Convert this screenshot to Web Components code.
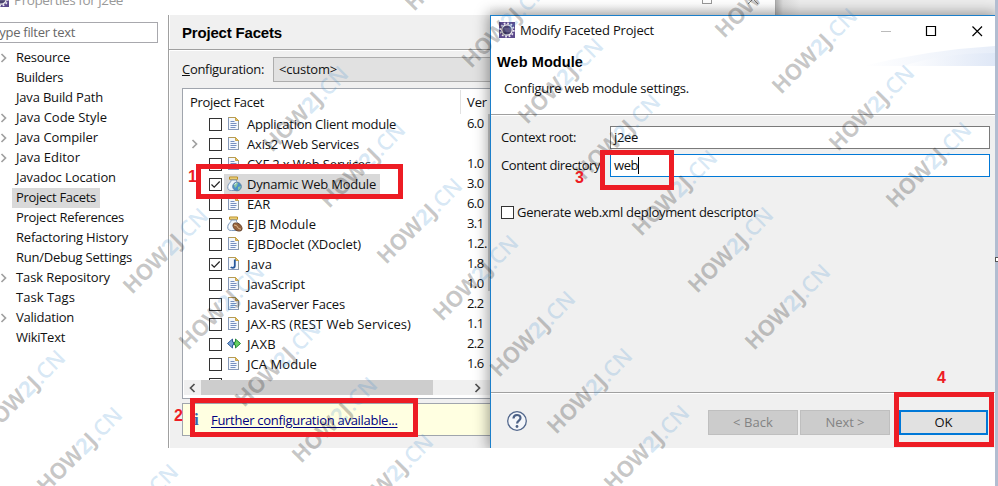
<!DOCTYPE html>
<html lang="en"><head><meta charset="utf-8"><title>Properties for j2ee</title>
<style>
html,body{margin:0;width:998px;height:486px;overflow:hidden;background:#fff}
body{font:13px/20px "Open Sans","Noto Sans",sans-serif;color:#111;position:relative}
</style></head><body>
<app-desktop>
  <properties-window></properties-window>
  <facet-dialog slot="dialog"></facet-dialog>
</app-desktop>
<water-marks></water-marks>
<call-out style="left:196px;top:164px;width:207px;height:35px"></call-out>
<call-out style="left:190px;top:398px;width:228px;height:39px"></call-out>
<call-out style="left:600px;top:150px;width:74px;height:40px"></call-out>
<call-out style="left:894px;top:392px;width:100px;height:55px"></call-out>
<step-number style="left:188px;top:167px">1</step-number>
<step-number style="left:174px;top:406px">2</step-number>
<step-number style="left:575px;top:168px">3</step-number>
<step-number style="left:937px;top:368px">4</step-number>
<script>
class Base extends HTMLElement{
  connectedCallback(){
    if(this.shadowRoot)return;
    this.attachShadow({mode:'open'}).innerHTML='<style>*{box-sizing:border-box}:host{display:block;box-sizing:border-box}'+this.css()+'</style>'+this.html();
  }
  css(){return ''} html(){return '<slot></slot>'}
}
const def=(n,css,html)=>customElements.define(n,class extends Base{
  css(){return css} html(){return typeof html==='function'?html(this):(html||'<slot></slot>')}
});

const page='<path d="M1.5 1.5h7l3 3v9h-10z" fill="#f4f8fd" stroke="#8f9a9a"/><path d="M1.5 1v13M1 13.500h11" stroke="#8799b8"/><path d="M1.500 1.500h7l3 3" fill="none" stroke="#b59a55"/><path d="M8.500 1.500v3h3z" fill="#e5c56c" stroke="#c9a548"/>';
const jar='<path d="M2.500 1h8v2.300h-8z" fill="#f5dc87" stroke="#b98d25"/><path d="M4 4v1.500C1 8 .5 10 .8 12.200 1 14 2.500 14.500 4.500 14.500h5c2 0 3-1 3-3C12.500 8.500 11 7 9.500 5.500V4z" fill="#edf4fb" stroke="#809bbd"/><path d="M2.500 9v3" stroke="#fff"/>';
const ICON={
 doc:page+'<path d="M3.500 5.500h4M3.500 7.500h6M3.500 9.500h6M3.500 11.500h5" stroke="#7791bf"/>',
 java:page+'<path d="M7.800 3.500v6.300q0 2-2 2-1.500 0-2-.7" fill="none" stroke="#28599b" stroke-width="1.800"/>',
 web:jar+'<circle cx="10" cy="10.500" r="4.300" fill="#4a91c8" stroke="#5e83a6"/><path d="M7 9q2-3 4-2l-1 3-2 2zM11 11l3-1-1 3-2 1z" fill="#8bc7a0"/><path d="M7.500 8.500l2-1.500" stroke="#e5f6ff"/>',
 ejb:jar+'<ellipse cx="10.500" cy="11" rx="5" ry="3.400" transform="rotate(35 10.500 11)" fill="#95623c" stroke="#654027"/><path d="M7 9q3 0 3.500 2t3.500 2.200" fill="none" stroke="#e2bd91"/>',
 jaxb:'<path d="M.5 7.500l5-4.500v3h1v3h-1v3z" fill="#76a2d4" stroke="#315c99"/><path d="M13.500 7.500l-5-4.500v3h-1v3h1v3z" fill="#68cf62" stroke="#278838"/>'
};
def('ui-icon',':host{width:16px;height:16px;flex:none}svg{display:block;overflow:visible}',e=>`<svg width="16" height="16" viewBox="0 0 16 16">${ICON[e.getAttribute('name')]||''}</svg>`);
def('ui-check',':host{width:13px;height:13px;flex:none;border:1px solid #333;background:#fff}svg{display:block}',e=>e.hasAttribute('on')?'<svg width="11" height="11"><path d="M1.500 5.500l2.700 2.700 5.500-5.700" fill="none" stroke="#222" stroke-width="1.200"/></svg>':'');
def('ui-arrow',':host{width:8px;height:10px;flex:none}svg{display:block}',()=>'<svg width="8" height="10"><path d="M1.500 1l4 4-4 4" fill="none" stroke="currentColor" stroke-width="1.700"/></svg>');
const ECL='<svg width="16" height="16"><rect width="16" height="16" fill="#5c4a8c"/><circle cx="8" cy="8" r="6.700" fill="none" stroke="#eeeaf4" stroke-width="1.800" stroke-dasharray="1.750 1.758"/><circle cx="8" cy="8" r="5.200" fill="#4a426f" stroke="#eee" stroke-width="1.300"/><path d="M4 7h8M4 9h8" stroke="#8f86ac" stroke-width=".7"/></svg>';

def('app-desktop',':host{width:998px;height:486px;position:relative;background:#fff;display:flex}.stage{width:995px;height:448px;overflow:hidden;position:relative;flex:none;background:linear-gradient(90deg,#b8b8b8 777px,#dcdcdc 783px,#ededed 800px)}.edge{flex:1;background:#b2bdd1;padding-top:257px}.edge i{display:block;height:5px;width:4px;border:1px solid #555;background:#fff}','<div class="stage"><slot></slot><slot name="dialog"></slot></div><div class="edge"><i></i></div>');

def('tree-item',':host{display:flex;height:20px;align-items:center;color:#111}.a{width:12px;display:flex;color:#a0a0a0}.l{padding:0 4px;height:20px;line-height:19px}:host([sel]) .l{background:#d9d9d9}',e=>`<div class="a">${e.hasAttribute('arrow')?'<ui-arrow></ui-arrow>':''}</div><div class="l"><slot></slot></div>`);
const tree=[['Resource',54,1],['Builders',47],['Java Build Path',87],['Java Code Style',91,1],['Java Compiler',82,1],['Java Editor',64,1],['Javadoc Location',100],['Project Facets',80],['Project References',108],['Refactoring History',112],['Run/Debug Settings',116],['Task Repository',94,1],['Task Tags',59],['Validation',58,1],['WikiText',49]];
def('nav-tree',':host{width:168px;flex:none;padding-top:7px}.f{height:21px;width:158px;border:1px solid #a8a8ad;border-left:0;color:#686868;line-height:18px;overflow:hidden;margin-bottom:5px}.f x-t{margin-left:-5px}',()=>'<div class="f"><x-t w="80">type filter text</x-t></div>'+tree.map(([t,w,a])=>`<tree-item ${a?'arrow':''} ${t=='Project Facets'?'sel':''}><x-t w="${w}">${t}</x-t></tree-item>`).join(''));

def('facet-row',':host{display:flex;height:20px;align-items:center;flex:none}.a{width:25px;padding-left:7px;color:#a0a0a0;display:flex}.n{display:flex;align-items:center;height:20px;padding:0 4px 0 3px;margin-left:2px}.n ui-icon{margin-right:4px}:host([sel]) .n{background:#d9d9d9}.v{margin-left:auto;width:24px;flex:none;line-height:18px;height:20px;white-space:nowrap}.n x-t{line-height:18px;height:20px}',e=>`<div class="a">${e.hasAttribute('arrow')?'<ui-arrow></ui-arrow>':''}</div><ui-check ${e.hasAttribute('on')?'on':''}></ui-check><div class="n"><ui-icon name="${e.getAttribute('icon')}"></ui-icon><slot></slot></div><div class="v">${e.getAttribute('v')?`<x-t w="${e.getAttribute('v').length>3?20:16.500}">${e.getAttribute('v')}</x-t>`:''}</div>`);
const rows=[['Application Client module',149,'6.0'],['Axis2 Web Services',112,'','doc','arrow'],['CXF 2.x Web Services',124,'1.0'],['Dynamic Web Module',129,'3.0','web','on sel'],['EAR',23,'6.0'],['EJB Module',69,'3.1','ejb'],['EJBDoclet (XDoclet)',114,'1.2.'],['Java',25,'1.8','java','on'],['JavaScript',58,'1.0'],['JavaServer Faces',98,'2.2'],['JAX-RS (REST Web Services)',164,'1.1'],['JAXB',29,'2.2','jaxb'],['JCA Module',70,'1.6'],['',0,'','none']];
def('facet-table',':host{height:311px;border:1px solid #a0a5ad;border-right:0;background:#fff;display:flex;flex-direction:column;padding:1px 0 4px 1px}.h{height:24px;display:flex;line-height:24px;flex:none}.h .c{width:277px;padding-left:6px;border-right:1px solid #e2e2e2}.h .d{padding-left:6px}.b{height:266px;overflow:hidden;display:flex;flex-direction:column;position:relative;flex:none}.vs{position:absolute;right:0;top:0;width:3px;height:177px;background:#cdcdcd}.s{height:15px;background:#f0f0f0;display:flex;align-items:center;padding-left:4px;color:#505050}.s i{width:232px;height:15px;background:#cdcdcd;margin:0 41px 0 5px}.s .l{transform:scaleX(-1)}',()=>'<div class="h"><div class="c"><x-t w="74">Project Facet</x-t></div><div class="d"><x-t w="20">Ver</x-t></div></div><div class="b">'+rows.map(([t,w,v,i='doc',x=''])=>`<facet-row v="${v}" icon="${i}" ${x}>${t?`<x-t w="${w}">${t}</x-t>`:''}</facet-row>`).join('')+'<span class="vs"></span></div><div class="s"><ui-arrow class="l"></ui-arrow><i></i><ui-arrow></ui-arrow></div>');

def('facet-panel',':host{width:323px;height:433px;background:#f0f0f0;border-left:1px solid #a0a0a0;box-shadow:inset 1px 0 #fff}.t{height:35px;border-bottom:1px solid #a0a0a0;box-shadow:0 1px #fff;padding:0 0 0 13px;font:bold 15px/36px "Liberation Sans",sans-serif;color:#000}.c{height:25px;margin:7px 0 6px 13px;display:flex;line-height:25px}.c .l{width:91px}.combo{flex:1;border:1px solid #adadad;border-right:0;background:#e1e1e1;line-height:23px;padding-left:5px}facet-table{margin-left:13px}.i{margin:4px 0 0 13px;height:33px;border:1px solid #a0a5ad;border-right:0;background:#ffffe1;display:flex;align-items:center}.i b{font:bold 17px/20px "Liberation Serif",serif;color:#3565aa;width:28px;padding-left:11px}.i .k{color:#000080;text-decoration:underline;text-underline-offset:2px}',
'<div class="t"><x-t w="100">Project Facets</x-t></div><div class="c"><div class="l"><x-t w="82"><u>C</u>onfiguration:</x-t></div><div class="combo"><x-t w="58">&lt;custom&gt;</x-t></div></div><facet-table></facet-table><div class="i"><b>i</b><x-t class="k" w="186.500">Further configuration available...</x-t></div>');

def('properties-window',':host{width:776px;height:448px;background:#fff;border-right:1px solid #aaa}.bar{height:15px;overflow:hidden;display:flex;color:#999;background:linear-gradient(#fff 4px,#f4f4f4)}.bar .m{display:flex;background:#fff;width:490px}.bar svg{flex:none;margin:-9px 5px 0 -7px}.bar x-t{line-height:20px;margin-top:-10px;font-size:13.500px}.sq{width:10px;height:10px;border:1px solid #999;margin:-6px 0 0 212px}.cl{margin:-6px 0 0 36px}.body{display:flex}',
`<div class="bar"><div class="m">${ECL}<x-t w="109">Properties for j2ee</x-t></div><div class="sq"></div><svg style="margin:-6px 0 0 36px" width="10" height="10"><path d="M0 0l10 10M10 0L0 10" stroke="#888"/></svg></div><div class="body"><nav-tree></nav-tree><facet-panel></facet-panel></div>`);

def('form-field',':host{display:flex;height:23px;align-items:center}.l{width:109px;flex:none;line-height:23px}.i{width:380px;height:23px;border:1px solid #7a7a7a;background:#fff;padding-left:3px;line-height:21px;display:flex;align-items:center}:host([focus]) .i{border-color:#0078d7}.i i{width:1px;height:17px;background:#000}',e=>`<div class="l"><slot name="l"></slot></div><div class="i"><slot></slot>${e.hasAttribute('focus')?'<i></i>':''}</div>`);
def('ui-button',':host{width:90px;height:25px;border:1px solid #bfbfbf;background:#ccc;color:#838383;text-align:center;line-height:23px}:host([primary]){width:89px;border:2px solid #0078d7;background:#e1e1e1;color:#111;line-height:21px}');
def('facet-dialog',':host{position:absolute;left:490px;top:15px;width:505px;height:433px;background:#f0f0f0;border:1px solid #1c7fca;border-right:0;border-bottom:0;box-shadow:0 0 13px 2px rgba(0,0,0,.38);display:flex;flex-direction:column}.head{background:#fff;height:99px;border-bottom:1px solid #a0a0a0;flex:none;box-shadow:0 1px #fff}.tt{height:28px;display:flex;align-items:center;padding-left:8px}.tt svg{flex:none}.tt x-t{margin-left:5px}.w{margin:1px 10px 0 auto}.bn{height:20px;margin-top:2px;display:flex;justify-content:space-between}.bn b{font:bold 14.500px/33px "Liberation Sans",sans-serif;padding-left:6px;color:#000}.sub{padding-left:13px;margin-top:12px}.form{padding:11px 0 0 10px;flex:1}.form form-field{margin-bottom:5px}.ck{display:flex;align-items:center;margin-top:25px;gap:3px}.foot{height:56px;flex:none;border-top:1px solid #a0a0a0;box-shadow:inset 0 1px #fff;display:flex;align-items:center;padding:4px 7px 0 15px}.foot .q{margin:-3px 180px 0 0}.foot ui-button+ui-button{margin-left:2px}.foot ui-button[primary]{margin-left:9px}',
`<div class="head"><div class="tt">${ECL}<x-t w="134">Modify Faceted Project</x-t><svg class="w" width="104" height="12"><path d="M0 6.500h10" stroke="#bbb"/><path d="M45.500 1.500h9v9h-9z" fill="none" stroke="#000" stroke-width="1.200"/><path d="M91.500 1.500l9.500 9.500M101 1.500l-9.500 9.500" stroke="#000" stroke-width="1.200"/></svg></div>
<div class="bn"><b><x-t w="86">Web Module</x-t></b><svg width="132" height="20"><defs><linearGradient id="g"><stop stop-color="#fff"/><stop offset="1" stop-color="#dde6f6"/></linearGradient></defs><path d="M0 20Q65 4 132 0V20z" fill="url(#g)" opacity=".7"/><path d="M40 20Q80 7 132 7V20z" fill="url(#g)" opacity=".8"/></svg></div><div class="sub"><x-t w="185">Configure web module settings.</x-t></div></div>
<div class="form"><form-field><x-t slot="l" w="75">Context root:</x-t><x-t w="24">j2ee</x-t></form-field><form-field focus><x-t slot="l" w="102">Content directory:</x-t><x-t w="24">web</x-t></form-field><div class="ck"><ui-check></ui-check><x-t w="241">Generate web.xml deployment descriptor</x-t></div></div>
<div class="foot"><svg class="q" width="22" height="22"><circle cx="11" cy="11" r="9.300" fill="#f4f6fa" stroke="#52678c" stroke-width="1.300"/><path d="M7.500 8.500C7.500 3.800 14.500 4 14.500 8c0 2.600-3.400 2.600-3.400 5.500" fill="none" stroke="#4c6186" stroke-width="2.200"/><circle cx="11" cy="16.500" r="1.400" fill="#4c6186"/></svg><ui-button><x-t w="40">&lt; Back</x-t></ui-button><ui-button><x-t w="39">Next &gt;</x-t></ui-button><ui-button primary><x-t w="18">OK</x-t></ui-button></div>`);

const marks=[[447,-32],[504,25],[560,81],[617,137],[674,193],[730,250],[787,307],[757,-5],[814,51],[871,108],[928,165],[305,109],[362,165],[419,221],[475,278],[532,334],[589,391],[646,448],[165,251],[221,307],[277,364],[334,420],[390,477],[22,393],[79,450],[135,507]];
def('water-marks',':host{position:absolute;inset:0;overflow:hidden;pointer-events:none}svg{display:block}text{font:bold 22px "Open Sans",sans-serif;fill:rgba(0,0,0,.22)}.b{fill:rgba(50,135,205,.2)}',()=>'<svg width="998" height="486">'+marks.map(([x,y])=>`<text transform="translate(${x} ${y}) rotate(-45)" x="-54.500" y="8" textLength="110">HOW<tspan class="b">2</tspan>J<tspan class="b" font-weight="600">.CN</tspan></text>`).join('')+'</svg>');
def('call-out',':host{position:absolute;border:5px solid #ed1c24;pointer-events:none}');
def('step-number',':host{position:absolute;font:bold 16px/20px "Liberation Sans",sans-serif;color:#ed1c24}');

/* Label whose letter spacing is adjusted so that it fills the width in its w attribute. */
customElements.define('x-t',class extends HTMLElement{
  connectedCallback(){
    if(this.shadowRoot)return;
    this.attachShadow({mode:'open'}).innerHTML='<style>:host{display:inline-block;white-space:nowrap}</style><slot></slot>';
    const r=this.getBoundingClientRect().width,w=+this.getAttribute('w'),n=this.textContent.length;
    if(r&&w)this.style.letterSpacing=((w-r)/n).toFixed(3)+'px';
  }
});
</script>
</body></html>
